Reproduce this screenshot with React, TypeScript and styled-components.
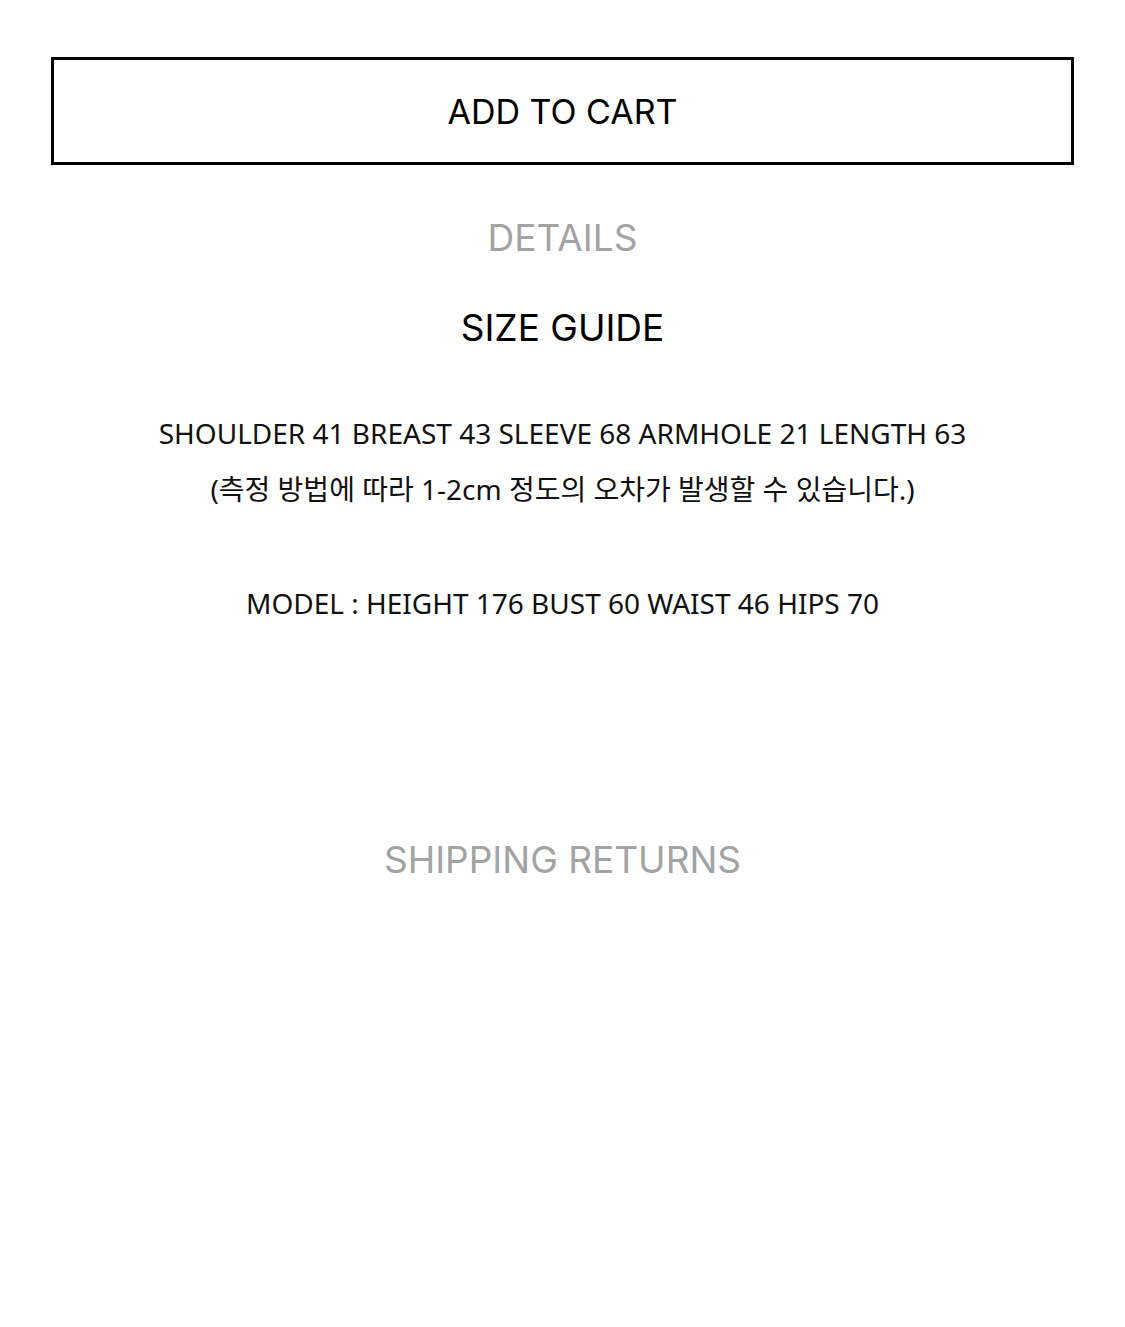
import styled, { createGlobalStyle } from 'styled-components';

const GlobalStyle = createGlobalStyle`
  html, body {
    margin: 0;
    padding: 0;
    background: #fff;
  }
`;

function App() {
  return (
    <>
      <GlobalStyle />
      <Page>
        <CartButton type="button">ADD TO CART</CartButton>
        <Tab $active={false}>DETAILS</Tab>
        <Tab $active>SIZE GUIDE</Tab>
        <Info>
          <InfoLine>SHOULDER 41 BREAST 43 SLEEVE 68 ARMHOLE 21 LENGTH 63</InfoLine>
          <InfoLine>(측정 방법에 따라 1-2cm 정도의 오차가 발생할 수 있습니다.)</InfoLine>
          <InfoGap />
          <InfoLine>MODEL : HEIGHT 176 BUST 60 WAIST 46 HIPS 70</InfoLine>
        </Info>
        <Tab $active={false} $spaced>SHIPPING RETURNS</Tab>
      </Page>
    </>
  );
}

const Page = styled.div`
  width: 100%;
  height: 1327px;
  box-sizing: border-box;
  padding: 57px 51px 0;

  display: flex;
  flex-direction: column;
  align-items: center;

  background: #fff;
`;

const CartButton = styled.button`
  width: 100%;
  height: 108px;
  box-sizing: border-box;
  margin: 0 0 48px;
  padding: 0;

  border: 3px solid #000;
  background: #fff;

  color: #000;
  font-family: Inter, 'Liberation Sans', sans-serif;
  font-size: 34px;
  font-weight: 400;
  cursor: pointer;
`;

const Tab = styled.h2<{ $active: boolean; $spaced?: boolean }>`
  margin: ${({ $spaced }) => ($spaced ? '204px 0 0' : '0 0 40px')};
  height: 50px;
  line-height: 50px;

  color: ${({ $active }) => ($active ? '#000' : '#a3a3a3')};
  font-family: Inter, 'Liberation Sans', sans-serif;
  font-size: 37px;
  font-weight: 400;
`;

const Info = styled.div`
  margin-top: 12px;

  display: flex;
  flex-direction: column;
  align-items: center;
`;

const InfoLine = styled.p`
  margin: 0;
  height: 56px;
  line-height: 56px;

  color: #111;
  font-family: 'Noto Sans', 'Noto Sans CJK KR', sans-serif;
  font-size: 28px;
  font-weight: 400;
`;

const InfoGap = styled.div`
  height: 58px;
`;

export default App;
